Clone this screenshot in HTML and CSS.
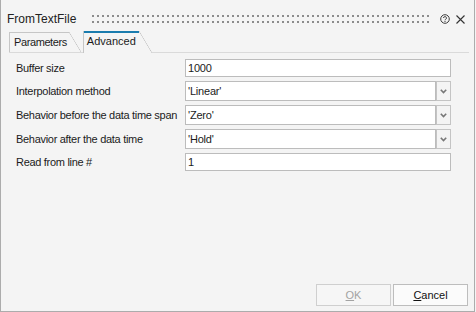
FILE: index.html
```html
<!DOCTYPE html>
<html lang="en">
<head>
  <meta charset="UTF-8" />
  <title>FromTextFile</title>
  <link rel="stylesheet" href="styles.css">
</head>
<body>
  <div class="window">
    <div class="titlebar">
      <span class="title">FromTextFile</span>
      <span class="grip"></span>
      <svg class="help" width="10" height="10" viewBox="0 0 10 10">
        <circle cx="5" cy="5" r="4.3" fill="none" stroke="#3c3c3c" stroke-width="1"/>
        <path d="M3.5 4 a1.5 1.4 0 1 1 2.1 1.3 q-0.6 0.3 -0.6 1" fill="none" stroke="#3c3c3c" stroke-width="1"/>
        <rect x="4.5" y="7" width="1" height="1" fill="#3c3c3c"/>
      </svg>
      <svg class="close" width="9" height="9" viewBox="0 0 9 9">
        <path d="M0.5 0.5 L8.5 8.5 M8.5 0.5 L0.5 8.5" stroke="#333" stroke-width="1.1"/>
      </svg>
    </div>

    <div class="tabs">
      <div class="tab">Parameters</div>
      <div class="tab active">Advanced</div>
    </div>

    <div class="panel">
      <div class="form">
        <span class="label">Buffer size</span>
        <div class="field">1000</div>

        <span class="label">Interpolation method</span>
        <div class="combo">
          <div class="combo-value">'Linear'</div>
          <div class="combo-btn"><svg width="7" height="5" viewBox="0 0 7 5"><path d="M0.8 0.8 L3.5 3.6 L6.2 0.8" fill="none" stroke="#777" stroke-width="1.6"/></svg></div>
        </div>

        <span class="label">Behavior before the data time span</span>
        <div class="combo">
          <div class="combo-value">'Zero'</div>
          <div class="combo-btn"><svg width="7" height="5" viewBox="0 0 7 5"><path d="M0.8 0.8 L3.5 3.6 L6.2 0.8" fill="none" stroke="#777" stroke-width="1.6"/></svg></div>
        </div>

        <span class="label">Behavior after the data time</span>
        <div class="combo">
          <div class="combo-value">'Hold'</div>
          <div class="combo-btn"><svg width="7" height="5" viewBox="0 0 7 5"><path d="M0.8 0.8 L3.5 3.6 L6.2 0.8" fill="none" stroke="#777" stroke-width="1.6"/></svg></div>
        </div>

        <span class="label">Read from line #</span>
        <div class="field">1</div>
      </div>
    </div>

    <div class="buttons">
      <button class="btn" disabled><u>O</u>K</button>
      <button class="btn"><u>C</u>ancel</button>
    </div>
  </div>
</body>
</html>
```

FILE: styles.css
```css
* {
  margin: 0;
  padding: 0;
  box-sizing: border-box;
}

body {
  font-family: 'Liberation Sans', Arial, sans-serif;
  font-size: 11px;
  color: #1b1b1b;
  background: #f4f4f4;
}

.window {
  width: 475px;
  height: 312px;
  background: #f4f4f4;
  border: 1px solid #acacac;
  border-top: none;
  display: flex;
  flex-direction: column;
}

/* title bar */
.titlebar {
  height: 30px;
  padding: 8px 9px 0 6px;
  display: flex;
  align-items: center;
}

.title {
  font-size: 12px;
  color: #222;
  line-height: 16px;
}

.grip {
  flex: 1;
  height: 8px;
  margin: 0 8px 0 16px;
  background-image: radial-gradient(circle at 1px 1px, #8c8c8c 0.9px, transparent 1.3px);
  background-size: 5px 6px;
}

.help {
  display: block;
}

.close {
  display: block;
  margin-left: 6px;
}

/* tabs */
.tabs {
  margin: 1px 5px 0 8px;
  height: 22px;
  display: flex;
  align-items: flex-end;
  border-bottom: 1px solid #dadada;
}

.tab {
  position: relative;
  height: 20px;
  padding: 3px 14px 0 4px;
  border-left: 1px solid #c6c6c6;
  letter-spacing: -0.4px;
  line-height: 15px;
  background: #f4f4f4;
}

.tab::before {
  content: '';
  position: absolute;
  top: 0;
  left: 0;
  right: 12px;
  height: 1px;
  background: #c6c6c6;
}

.tab::after {
  content: '';
  position: absolute;
  top: 0;
  right: 0;
  width: 12px;
  height: 100%;
  background: linear-gradient(to top right, transparent calc(50% - 0.6px), #c6c6c6, transparent calc(50% + 0.6px));
}

.tab.active {
  height: 22px;
  margin-left: 2px;
  margin-bottom: -1px;
  padding: 3px 16px 0 3px;
  letter-spacing: 0;
  z-index: 1;
}

.tab.active::before {
  height: 2px;
  right: 13px;
  background: #1a7cae;
}

.tab.active::after {
  width: 13px;
}

/* form */
.panel {
  padding: 6px 0 0 15px;
}

.form {
  display: grid;
  grid-template-columns: 169px 266px;
  row-gap: 4px;
  align-items: center;
}

.label {
  letter-spacing: -0.3px;
}

.field {
  height: 18px;
  border: 1px solid #bcbcbc;
  background: #fff;
  padding-left: 2px;
  line-height: 16px;
  letter-spacing: -0.2px;
}

.combo {
  display: flex;
  height: 20px;
}

.combo-value {
  flex: 1;
  border: 1px solid #bcbcbc;
  background: #fff;
  padding-left: 2px;
  line-height: 18px;
  letter-spacing: -0.2px;
}

.combo-btn {
  width: 15px;
  border: 1px solid #c4c4c4;
  display: flex;
  align-items: center;
  justify-content: center;
}

.combo-btn svg {
  display: block;
}

/* bottom buttons */
.buttons {
  margin-top: auto;
  padding: 0 6px 5px 0;
  display: flex;
  justify-content: flex-end;
  gap: 2px;
}

.btn {
  width: 75px;
  height: 22px;
  font-family: inherit;
  font-size: 11px;
  color: #111;
  background: #fbfbfb;
  border: 1px solid #bdbdbd;
}

.btn:disabled {
  color: #a3a3a3;
  background: #f6f6f6;
  border-color: #cfcfcf;
}
```
